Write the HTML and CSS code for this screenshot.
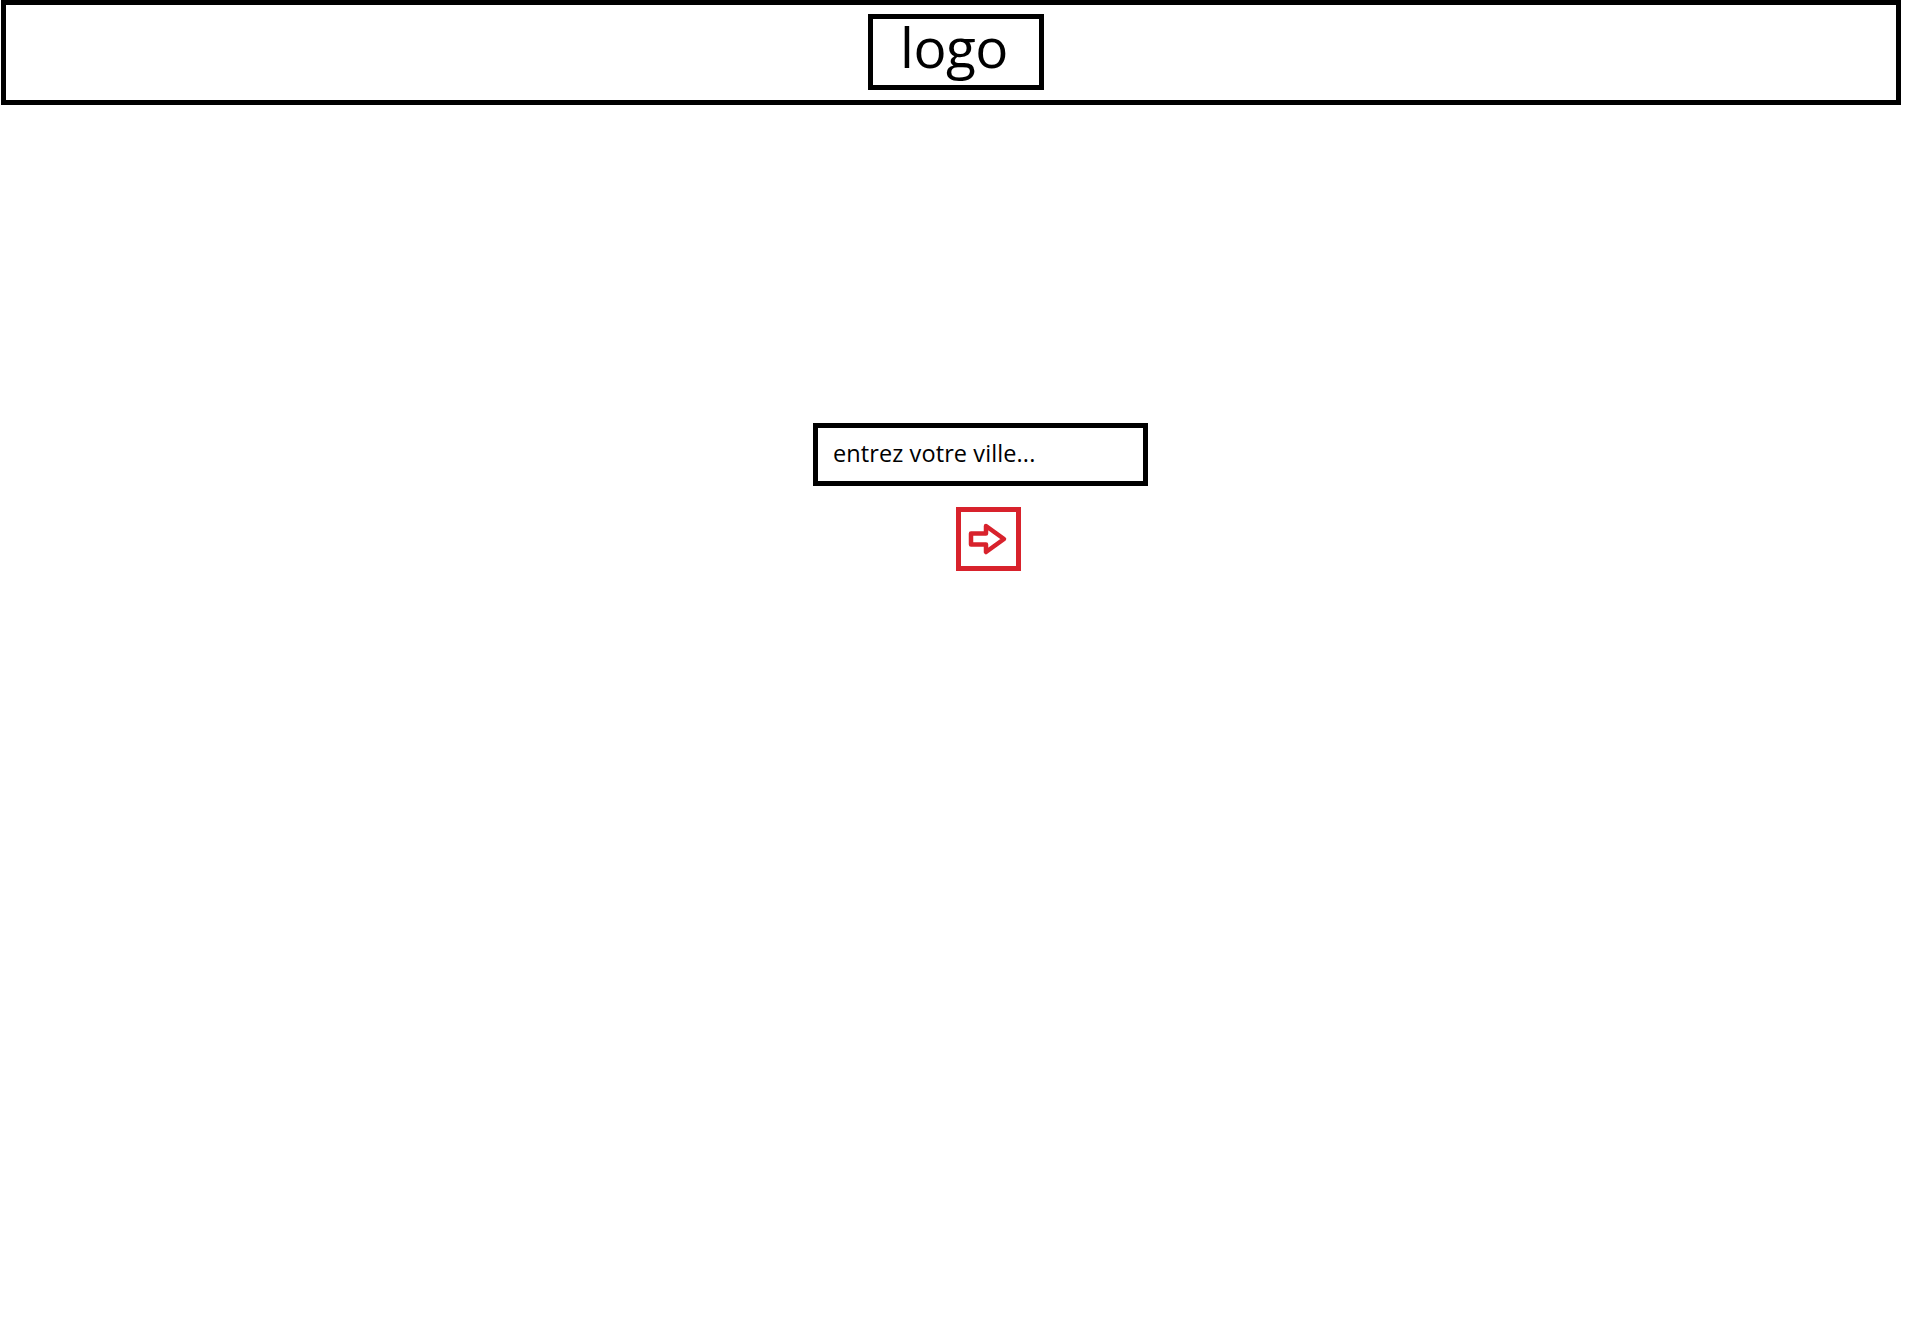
FILE: index.html
```html
<!DOCTYPE html>
<html lang="fr">
<head>
<meta charset="utf-8">
<title>Météo</title>
<link rel="stylesheet" href="styles.css">
</head>
<body>
<header class="site-header">
  <div class="logo">logo</div>
</header>
<main class="main">
  <form class="search" onsubmit="return false">
    <div class="city-input">entrez votre ville...</div>
    <button class="go" type="submit" aria-label="Valider">
      <svg width="40" height="34" viewBox="0 0 40 34">
        <path d="M3 11.5 H18 V4 L36 17 L18 30 V22.5 H3 Z" fill="none" stroke="#d8222c" stroke-width="4.5" stroke-linejoin="round"/>
      </svg>
    </button>
  </form>
</main>
</body>
</html>
```

FILE: styles.css
```css
html, body {
  margin: 0;
  padding: 0;
  background: #ffffff;
}
body {
  font-family: "Open Sans", "Liberation Sans", sans-serif;
  color: #000;
}
.site-header {
  box-sizing: border-box;
  margin-left: 1px;
  width: 1900px;
  height: 105px;
  border: 5px solid #000;
  display: flex;
  justify-content: center;
  align-items: flex-start;
  padding: 9px 0 0 10px;
}
.logo {
  box-sizing: border-box;
  width: 176px;
  height: 76px;
  border: 5px solid #000;
  display: flex;
  justify-content: center;
  align-items: center;
  font-size: 55px;
  line-height: 1;
  padding: 0 4px 12px 0;
  letter-spacing: -0.5px;
}
.main {
  padding: 318px 0 0 813px;
}
.search {
  width: 335px;
  display: flex;
  flex-direction: column;
  align-items: center;
  margin: 0;
}
.city-input {
  box-sizing: border-box;
  width: 335px;
  height: 63px;
  border: 5px solid #000;
  font-size: 23.5px;
  line-height: 1;
  padding: 14px 0 0 15px;
  letter-spacing: 0.1px;
}
.go {
  box-sizing: border-box;
  margin: 21px 0 0 16px;
  width: 65px;
  height: 64px;
  border: 5px solid #d8222c;
  background: #fff;
  padding: 0;
  display: flex;
  align-items: center;
  justify-content: center;
  cursor: pointer;
}
.go svg {
  display: block;
  margin-left: -2px;
}
```
